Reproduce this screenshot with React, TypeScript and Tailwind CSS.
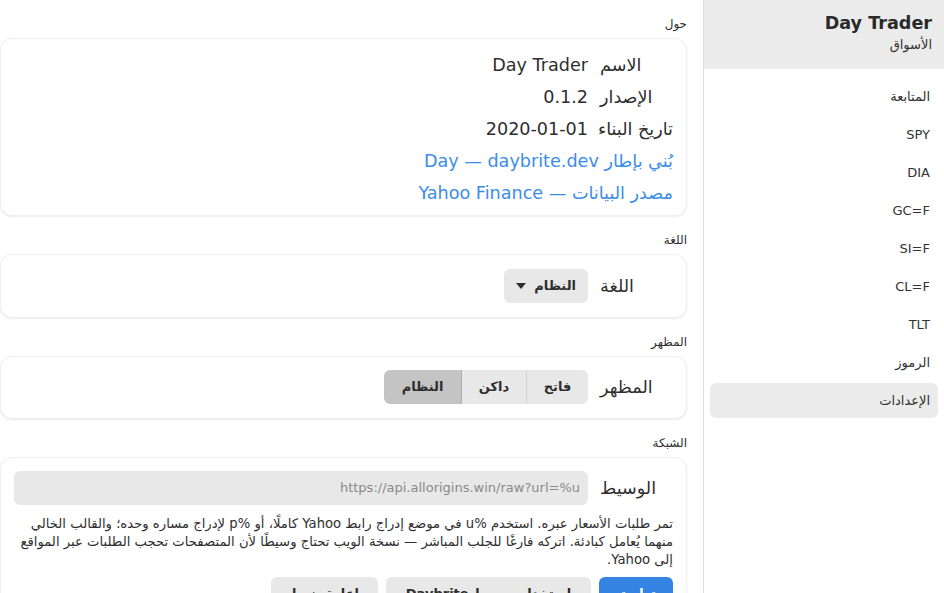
import React from "react";

const font = { fontFamily: '"DejaVu Sans", "Noto Sans", sans-serif' };

const navItems = ["المتابعة", "SPY", "DIA", "GC=F", "SI=F", "CL=F", "TLT", "الرموز", "الإعدادات"];

const Section: React.FC<{ title: string; children: React.ReactNode; className?: string }> = ({ title, children, className }) => (
  <section>
    <h2 className="text-[12px] leading-4 text-[#2e2e2e] mb-[6px]">{title}</h2>
    <div className={`bg-white rounded-xl border border-[#efefef] shadow-[0_1px_2px_rgba(0,0,0,0.08)] px-[13px] ${className ?? ""}`}>
      {children}
    </div>
  </section>
);

const Row: React.FC<{ label: string; children: React.ReactNode }> = ({ label, children }) => (
  <div className="flex items-center gap-3">
    <div className="w-[73px] text-left text-[17.6px] text-[#2e2e2e] shrink-0">{label}</div>
    {children}
  </div>
);

const InfoRow: React.FC<{ label: string; value: string }> = ({ label, value }) => (
  <div className="h-8 flex items-center gap-3">
    <div className="w-[73px] text-left text-[17.6px] shrink-0 whitespace-nowrap">{label}</div>
    <div className="text-[17.6px]">{value}</div>
  </div>
);

export default function App() {
  return (
    <div dir="rtl" style={font} className="flex h-screen overflow-hidden bg-white text-[#2e2e2e]">
      {/* Sidebar */}
      <aside className="w-[241px] shrink-0 border-l border-[#dcdcdc] bg-white flex flex-col">
        <div className="bg-[#ebebeb] h-[69px] px-3 pt-[12px]">
          <div className="text-[17.6px] font-bold leading-[22px] text-[#2a2a2a]">Day Trader</div>
          <div className="text-[13px] leading-[22px] text-[#333]">الأسواق</div>
        </div>
        <nav className="flex flex-col gap-[3px] px-[6px] pt-[10px]">
          {navItems.map((item, i) => (
            <div
              key={i}
              className={`h-[35px] flex items-center px-2 rounded-md text-[13px] text-[#333] ${
                i === navItems.length - 1 ? "bg-[#ebebeb]" : ""
              }`}
            >
              {item}
            </div>
          ))}
        </nav>
      </aside>

      {/* Main */}
      <main className="flex-1 pr-[16px] pl-0 pt-4 overflow-hidden">
        <div className="flex flex-col gap-4">
          <Section title="حول" className="pt-[10px] pb-[6px]">
            <div className="flex flex-col">
              <InfoRow label="الاسم" value="Day Trader" />
              <InfoRow label="الإصدار" value="0.1.2" />
              <InfoRow label="تاريخ البناء" value="2020-01-01" />
              <div className="h-8 flex items-center text-[17.6px] text-[#3b8de8]">بُني بإطار Day — daybrite.dev</div>
              <div className="h-8 flex items-center text-[17.6px] text-[#3b8de8]">مصدر البيانات — Yahoo Finance</div>
            </div>
          </Section>

          <Section title="اللغة" className="py-[14px]">
            <Row label="اللغة">
              <button className="h-[34px] px-[12px] rounded-md bg-[#e8e8e8] flex items-center gap-2 text-[13px] font-bold text-[#2e2e2e]">
                النظام
                <svg width="10" height="6" viewBox="0 0 10 6">
                  <path d="M0 0 L10 0 L5 6 Z" fill="#2e2e2e" />
                </svg>
              </button>
            </Row>
          </Section>

          <Section title="المظهر" className="pt-[13px] pb-[14px]">
            <Row label="المظهر">
              <div className="flex h-[34px] rounded-md overflow-hidden text-[13px] font-bold text-[#2e2e2e]">
                <button className="w-[62px] bg-[#e8e8e8] border-l border-[#d4d4d4]">فاتح</button>
                <button className="w-[65px] bg-[#e8e8e8] border-l border-[#b0b0b0]">داكن</button>
                <button className="w-[77px] bg-[#c4c4c4]">النظام</button>
              </div>
            </Row>
          </Section>

          <Section title="الشبكة" className="pt-[13px] pb-4">
            <Row label="الوسيط">
              <div className="flex-1 h-[34px] rounded-md bg-[#e8e8e8] flex items-center px-2">
                <span dir="ltr" className="text-[13px] text-[#8a8a8a]">https://api.allorigins.win/raw?url=%u</span>
              </div>
            </Row>
            <p className="mt-[10px] text-[13.2px] leading-[18px] text-[#2e2e2e]">
              تمر طلبات الأسعار عبره. استخدم %u في موضع إدراج رابط Yahoo كاملًا، أو %p لإدراج مساره وحده؛ والقالب الخالي منهما يُعامل كبادئة. اتركه فارغًا للجلب المباشر — نسخة الويب تحتاج وسيطًا لأن المتصفحات تحجب الطلبات عبر المواقع إلى Yahoo.
            </p>
            <div className="flex gap-2 mt-2">
              <button className="h-[34px] w-[74px] rounded-md bg-[#3584e4] text-white text-[13px] font-bold">تطبيق</button>
              <button className="h-[34px] px-4 w-[205px] rounded-md bg-[#e8e8e8] text-[#2e2e2e] text-[13px] font-bold">استخدام وسيط Daybrite</button>
              <button className="h-[34px] px-4 w-[107px] rounded-md bg-[#e8e8e8] text-[#2e2e2e] text-[13px] font-bold">إعادة ضبط</button>
            </div>
          </Section>
        </div>
      </main>
    </div>
  );
}
